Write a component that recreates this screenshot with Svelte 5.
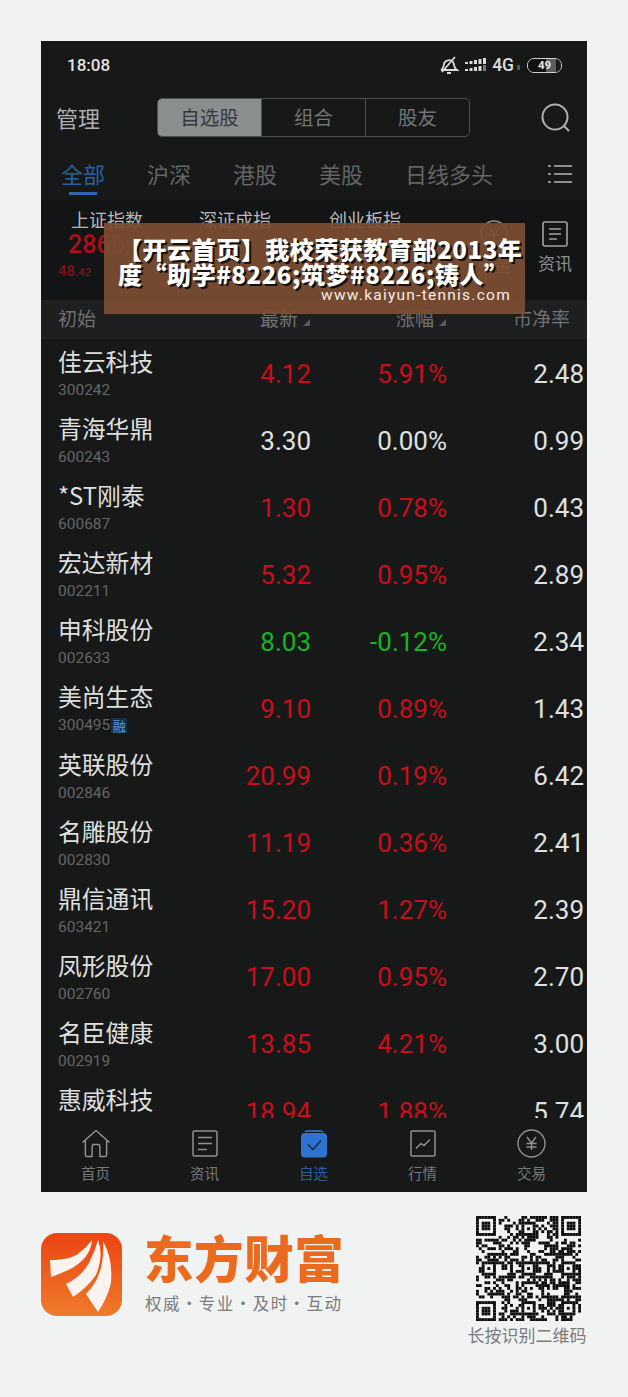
<script>
  const stocks = [
    ['佳云科技','300242','4.12','5.91%','2.48','up'],
    ['青海华鼎','600243','3.30','0.00%','0.99','flat'],
    ['*ST刚泰','600687','1.30','0.78%','0.43','up'],
    ['宏达新材','002211','5.32','0.95%','2.89','up'],
    ['申科股份','002633','8.03','-0.12%','2.34','down'],
    ['美尚生态','300495','9.10','0.89%','1.43','up'],
    ['英联股份','002846','20.99','0.19%','6.42','up'],
    ['名雕股份','002830','11.19','0.36%','2.41','up'],
    ['鼎信通讯','603421','15.20','1.27%','2.39','up'],
    ['凤形股份','002760','17.00','0.95%','2.70','up'],
    ['名臣健康','002919','13.85','4.21%','3.00','up'],
    ['惠威科技','','18.94','1.88%','5.74','up']
  ];
  const tabs = ['全部','沪深','港股','美股','日线多头'];
  const N = 37;
  const qr = [];
  let seed = 20170811;
  const inBox = (x, y, bx, by, s) => x >= bx && x < bx + s && y >= by && y < by + s;
  const aligns = [[17,3],[3,17],[17,17],[31,17],[17,31],[31,31]];
  for (let y = 0; y < N; y++) {
    for (let x = 0; x < N; x++) {
      seed = (seed * 1103515245 + 12345) & 0x7fffffff;
      let on = ((seed >> 16) & 7) < 4;
      const corner = [[0,0],[N-7,0],[0,N-7]].find(([a,b]) => inBox(x,y,a-1,b-1,9));
      if (corner) {
        const [a,b] = corner;
        const dx = x - a, dy = y - b;
        const outer = dx >= 0 && dx < 7 && dy >= 0 && dy < 7;
        const ring = outer && (dx === 0 || dx === 6 || dy === 0 || dy === 6);
        const core = dx >= 2 && dx < 5 && dy >= 2 && dy < 5;
        on = ring || core;
      } else {
        const al = aligns.find(([a,b]) => inBox(x,y,a-1,b-1,5));
        if (al) {
          const dx = x - al[0] + 1, dy = y - al[1] + 1;
          on = dx === 0 || dx === 4 || dy === 0 || dy === 4 || (dx === 2 && dy === 2);
        }
      }
      if (on) qr.push([x, y]);
    }
  }
</script>

<div class="page">
  <section class="phone">
    <div class="status">
      <span class="time">18:08</span>
      <div class="status-right">
        <svg class="bell" width="20" height="20" viewBox="0 0 20 20" fill="none" stroke="#d8d9d9" stroke-width="1.800">
          <path d="M2 15c2.500-1 2.500-3.500 3-6 .7-3.500 6.500-5.500 9-2 1.500 2.500.5 6 4 8z"/>
          <path d="M8 18h4M3 17L16 2"/>
        </svg>
        <svg class="signal" width="22" height="16" viewBox="0 0 22 16" fill="#d8d9d9">
          <rect x="0" y="5" width="3" height="2"/><rect x="4.500" y="4" width="3" height="3"/><rect x="9" y="3" width="3" height="4"/><rect x="13.500" y="2" width="3" height="5"/><rect x="18" y="1" width="3" height="6"/>
          <rect x="0" y="12" width="3" height="2"/><rect x="4.500" y="11" width="3" height="3"/><rect x="9" y="10" width="3" height="4"/><rect x="13.500" y="9" width="3" height="5"/><rect x="18" y="8" width="3" height="6" fill="#77797a"/>
        </svg>
        <span class="net">4G</span>
        <span class="net-dot"></span>
        <span class="battery"><span class="battery-fill"></span><span class="battery-text">49</span></span>
      </div>
    </div>

    <header class="top">
      <span class="manage">管理</span>
      <div class="segments">
        <span class="seg active">自选股</span>
        <span class="seg">组合</span>
        <span class="seg">股友</span>
      </div>
      <svg class="search" width="32" height="32" viewBox="0 0 32 32" fill="none" stroke="#aeb0b0" stroke-width="2">
        <circle cx="15" cy="15" r="12.500"/><path d="M24 24l5 5"/>
      </svg>
    </header>

    <nav class="tabs">
      {#each tabs as t, i}
        <span class="tab" class:current={i === 0}>{t}</span>
      {/each}
      <svg class="listicon" width="24" height="20" viewBox="0 0 24 20" fill="#8b8d8e">
        <rect x="0" y="1" width="3" height="2"/><rect x="6" y="1" width="18" height="2"/>
        <rect x="0" y="9" width="3" height="2"/><rect x="6" y="9" width="18" height="2"/>
        <rect x="0" y="17" width="3" height="2"/><rect x="6" y="17" width="18" height="2"/>
      </svg>
    </nav>

    <div class="indices">
      <div class="index i1"><span class="iname">上证指数</span><b>2866.</b><small>48<em>.42</em></small></div>
      <div class="index i2"><span class="iname">深证成指</span></div>
      <div class="index i3"><span class="iname">创业板指</span></div>
      <div class="side fund">
        <svg width="30" height="30" viewBox="0 0 30 30" fill="none" stroke="#8a8c8d" stroke-width="1.500">
          <circle cx="15" cy="15" r="13"/><path d="M10 9l5 6 5-6M9.500 16h11M15 15v8"/>
        </svg>
        <span>资金</span>
      </div>
      <div class="side news">
        <svg width="26" height="26" viewBox="0 0 26 26" fill="none" stroke="#a0a2a3" stroke-width="1.600">
          <rect x="1" y="1" width="24" height="24" rx="2"/><path d="M7 8h12M7 13h12M7 18h8"/>
        </svg>
        <span>资讯</span>
      </div>
    </div>

    <div class="thead">
      <span>初始</span>
      <span class="th">最新<i></i></span>
      <span class="th">涨幅<i></i></span>
      <span class="th pe">市净率</span>
    </div>

    <div class="rows">
      {#each stocks as s}
        <div class="row">
          <div class="namecell">
            <div class="name">{s[0]}</div>
            <div class="code">{s[1]}{#if s[1] === '300495'}<span class="rong">融</span>{/if}</div>
          </div>
          <span class="num {s[5]}">{s[2]}</span>
          <span class="num {s[5]}">{s[3]}</span>
          <span class="num pe-val">{s[4]}</span>
        </div>
      {/each}
    </div>

    <footer class="bar">
      <div class="item">
        <svg width="32" height="30" viewBox="0 0 32 30" fill="none" stroke="#8f9192" stroke-width="1.500" stroke-linejoin="round">
          <path d="M2 14L16 1.500 30 14M5 12v15a1.500 1.500 0 0 0 1.500 1.500H12V18a2 2 0 0 1 2-2h4a2 2 0 0 1 2 2v10.500h5.500A1.500 1.500 0 0 0 27 27V12"/>
        </svg>
        <span>首页</span>
      </div>
      <div class="item">
        <svg width="26" height="28" viewBox="0 0 26 28" fill="none" stroke="#8f9192" stroke-width="1.500">
          <rect x="1" y="1.500" width="24" height="25" rx="1.500"/><path d="M6 8h14M6 14h14M6 20h9"/>
        </svg>
        <span>资讯</span>
      </div>
      <div class="item sel">
        <svg width="26" height="28" viewBox="0 0 26 28">
          <path d="M3 2.500Q4 .5 7 .5h12q3 0 4 2z" fill="#2c64ad"/>
          <rect x="0" y="3.500" width="26" height="24.500" rx="4" fill="#2f73d2"/>
          <path d="M7 15l5 5 8-9" fill="none" stroke="#12243f" stroke-width="1.500"/>
        </svg>
        <span>自选</span>
      </div>
      <div class="item">
        <svg width="26" height="28" viewBox="0 0 26 28" fill="none" stroke="#8f9192" stroke-width="1.500">
          <rect x="1" y="1.500" width="24" height="25" rx="1"/><path d="M6 19l5-5 3 2 6-6"/>
        </svg>
        <span>行情</span>
      </div>
      <div class="item">
        <svg width="29" height="29" viewBox="0 0 29 29" fill="none" stroke="#8f9192" stroke-width="1.400">
          <circle cx="14.500" cy="14.500" r="13.500"/><path d="M10 8l4.500 6 4.500-6M9.500 14.500h10M9.500 18h10M14.500 14v7"/>
        </svg>
        <span>交易</span>
      </div>
    </footer>

    <div class="banner">
      <div class="headline">【开云首页】我校荣获教育部2013年</div>
      <div class="headline">度“助学#8226;筑梦#8226;铸人”</div>
      <div class="url">www.kaiyun-tennis.com</div>
    </div>
  </section>

  <section class="brand">
    <svg class="logo" width="81" height="83" viewBox="0 0 81 83">
      <defs>
        <linearGradient id="lg" x1="0" y1="0" x2="0" y2="1">
          <stop offset="0" stop-color="#ec4413"/>
          <stop offset="1" stop-color="#ef7a2b"/>
        </linearGradient>
      </defs>
      <rect width="81" height="83" rx="16" fill="url(#lg)"/>
      <path d="M9 27Q30 27 38 20 46 14 51 7 50 23 33 34 22 40 10 44Z" fill="#fbf4ee"/>
      <path d="M25 51Q40 44 48 30 54 18 57 7 63 22 55 42 46 55 32 64Z" fill="#fbf4ee"/>
      <path d="M45 61Q58 48 61 30 63 18 62 8 72 26 70 50 66 66 57 79Z" fill="#fbf4ee"/>
    </svg>
    <div class="wordmark">
      <div class="bigname">东方财富</div>
      <div class="slogan">权威·专业·及时·互动</div>
    </div>
    <div class="qrblock">
      <svg class="qr" width="105" height="105" viewBox="0 0 37 37">
        {#each qr as [x, y]}
          <rect x={x} y={y} width="1.020" height="1.020" fill="#0c0c0c"/>
        {/each}
      </svg>
      <span class="qrlabel">长按识别二维码</span>
    </div>
  </section>
</div>

<style>
  :global(body) {
    margin: 0;
    background: #f1f2f2;
  }
  .page {
    width: 628px;
    height: 1397px;
    box-sizing: border-box;
    padding: 41px 41px 0;
    background: #f1f2f2;
    overflow: hidden;
    font-family: "Noto Sans CJK SC", "Noto Sans", sans-serif;
  }
  .phone {
    position: relative;
    height: 1151px;
    background: #171919;
    overflow: hidden;
    display: flex;
    flex-direction: column;
    color: #e4e5e5;
  }
  .status {
    height: 48px;
    flex: none;
    display: flex;
    align-items: center;
    justify-content: space-between;
    padding: 0 25px 0 26px;
    box-sizing: border-box;
  }
  .time {
    font: 500 17px Roboto, sans-serif;
    color: #e2e3e3;
  }
  .status-right {
    display: flex;
    align-items: center;
  }
  .bell { margin-right: 6px; }
  .signal { margin-right: 5px; }
  .net {
    font: 500 17.500px Roboto, sans-serif;
    color: #dcdddd;
  }
  .net-dot {
    width: 3px;
    height: 5px;
    margin: 5px 7px 0 3px;
    background: #565859;
  }
  .battery {
    position: relative;
    display: block;
    width: 33px;
    height: 13px;
    border: 1px solid #d0d2d2;
    border-radius: 7px;
    overflow: hidden;
  }
  .battery-fill {
    position: absolute;
    left: 0;
    top: 0;
    bottom: 0;
    width: 100%;
    background: linear-gradient(90deg, #111 0 55%, #5a5c5d 55% 85%, #1a1a1a 85%);
  }
  .battery-text {
    position: absolute;
    inset: 0;
    text-align: center;
    font: 700 11.500px/13px Roboto, sans-serif;
    color: #e6e7e7;
  }
  .top {
    height: 58px;
    flex: none;
    display: flex;
    align-items: center;
    padding: 0 15px 0 15px;
    box-sizing: border-box;
  }
  .manage {
    width: 101px;
    margin-top: -3px;
    font-size: 22px;
    color: #aeb0b0;
  }
  .segments {
    display: flex;
    width: 313px;
    height: 39px;
    margin-top: -1px;
    box-sizing: border-box;
    border: 1px solid #4c4f50;
    border-radius: 5px;
    overflow: hidden;
  }
  .seg {
    flex: 1;
    display: flex;
    align-items: center;
    justify-content: center;
    padding-bottom: 2px;
    font-size: 19.500px;
    color: #737576;
  }
  .seg + .seg { border-left: 1px solid #4c4f50; }
  .seg.active {
    background: #8b8e8e;
    color: #37393a;
  }
  .search { margin-left: auto; }
  .tabs {
    position: relative;
    height: 53px;
    flex: none;
    display: flex;
    align-items: center;
    gap: 42px;
    padding: 0 15px 2px 20px;
    box-sizing: border-box;
  }
  .tab {
    position: relative;
    font-size: 22px;
    color: #626465;
  }
  .tab.current { color: #2b5fa5; }
  .tab.current::after {
    content: "";
    position: absolute;
    left: 8px;
    right: 8px;
    bottom: -6px;
    height: 3px;
    background: #2f66b0;
  }
  .listicon { margin-left: auto; margin-top: 2px; }
  .indices {
    position: relative;
    height: 100px;
    flex: none;
    background: #121415;
    display: flex;
  }
  .index {
    display: flex;
    flex-direction: column;
    padding-top: 7px;
    white-space: nowrap;
  }
  .iname {
    font-size: 18px;
    line-height: 24px;
    color: #b8baba;
  }
  .i1 { margin-left: 27px; width: 131px; padding-left: 5px; box-sizing: border-box; }
  .i1 .iname { margin-left: -2px; }
  .i1 b {
    margin-left: -5px;
    margin-top: -2px;
    font: 500 25px/32px Roboto, sans-serif;
    color: #a8101a;
  }
  .i1 small {
    margin-left: -15px;
    font: 500 15px/20px Roboto, sans-serif;
    color: #7d1418;
  }
  .i1 em {
    font-size: 11.500px;
    font-style: normal;
  }
  .i2 { width: 130px; }
  .i3 { width: 130px; }
  .side {
    position: absolute;
    top: 21px;
    display: flex;
    flex-direction: column;
    align-items: center;
    gap: 3px;
    font-size: 17px;
    color: #8d8f90;
  }
  .fund { left: 436px; top: 19px; }
  .news { left: 497px; }
  .thead, .row {
    display: grid;
    grid-template-columns: 123px 130px 136px 137px;
    padding-left: 17px;
  }
  .thead {
    height: 39px;
    flex: none;
    align-items: center;
    padding-bottom: 4px;
    background: #1d1f20;
    font-size: 19px;
    color: #6f7172;
    box-sizing: border-box;
  }
  .th {
    position: relative;
    text-align: right;
    padding-right: 13px;
  }
  .th i {
    position: absolute;
    right: 1px;
    bottom: 5px;
    width: 0;
    height: 0;
    border-left: 7px solid transparent;
    border-bottom: 7px solid #565859;
  }
  .th.pe { padding-right: 14px; }
  .rows {
    flex: 1;
    min-height: 0;
    overflow: hidden;
  }
  .row {
    height: 67.100px;
    align-items: center;
    box-sizing: border-box;
  }
  .namecell {
    align-self: start;
    white-space: nowrap;
  }
  .name {
    margin-top: 5px;
    font-size: 23.800px;
    line-height: 34px;
    color: #dedfdf;
  }
  .code {
    display: flex;
    align-items: center;
    height: 22px;
    margin-top: 1px;
    font: 15.500px/22px Roboto, sans-serif;
    color: #636566;
  }
  .rong {
    width: 16px;
    height: 15px;
    margin-left: 1px;
    background: #15304f;
    color: #5a97e0;
    font: 13px/15px "Noto Sans CJK SC", sans-serif;
    text-align: center;
  }
  .num {
    text-align: right;
    font: 26px Roboto, sans-serif;
    padding-top: 2px;
    color: #e4e5e5;
  }
  .pe-val { color: #dfe0e0; }
  .up { color: #c80e1a; }
  .down { color: #17b421; }
  .flat { color: #dfe0e0; }
  .bar {
    height: 74px;
    flex: none;
    display: grid;
    grid-template-columns: repeat(5, 109px);
    background: #171919;
  }
  .item {
    display: flex;
    flex-direction: column;
    align-items: center;
    justify-content: flex-start;
    padding-top: 11px;
    height: 74px;
    box-sizing: border-box;
    font-size: 14.500px;
    line-height: 20px;
    color: #76787a;
  }
  .item svg { height: 29px; margin-bottom: 5px; flex: none; }
  .item.sel { color: #2b5fa5; }
  .banner {
    position: absolute;
    left: 63px;
    top: 182px;
    width: 421px;
    height: 91px;
    box-sizing: border-box;
    padding: 13px 14px 0;
    background: rgba(124, 77, 50, 0.93);
    color: #fff;
  }
  .headline {
    font-size: 24px;
    font-weight: 900;
    line-height: 25px;
    letter-spacing: 0.550px;
    white-space: nowrap;
    text-shadow: 2px 2px 0 #111;
  }
  .url {
    margin-top: -1px;
    text-align: right;
    font: 15.500px/20px Roboto, sans-serif;
    letter-spacing: 1.250px;
    color: #f6eee8;
  }
  .brand {
    position: relative;
    display: flex;
    padding-top: 41px;
    align-items: flex-start;
  }
  .logo { flex: none; }
  .wordmark {
    margin-left: 22px;
    display: flex;
    flex-direction: column;
  }
  .bigname {
    margin-top: -11px;
    font-size: 49.500px;
    font-weight: 900;
    line-height: 70px;
    letter-spacing: 0.600px;
    color: #ec6a1e;
    white-space: nowrap;
  }
  .slogan {
    margin-top: -1px;
    margin-left: 1px;
    font-size: 16.500px;
    line-height: 24px;
    letter-spacing: 1.450px;
    color: #7a7c7d;
    white-space: nowrap;
  }
  .qrblock {
    position: absolute;
    right: 0;
    top: 24px;
    width: 120px;
    display: flex;
    flex-direction: column;
    align-items: center;
  }
  .qr {
    display: block;
    margin-right: -3px;
    filter: blur(0.4px);
  }
  .qrlabel {
    margin-top: 2px;
    font-size: 17px;
    line-height: 24px;
    color: #7a7c7d;
    white-space: nowrap;
  }
</style>
